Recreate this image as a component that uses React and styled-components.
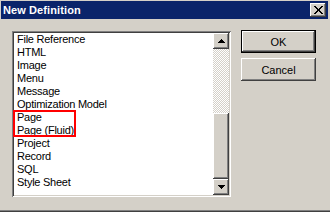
import React from 'react';
import styled, { createGlobalStyle } from 'styled-components';

const ITEMS = [
  'File Reference',
  'HTML',
  'Image',
  'Menu',
  'Message',
  'Optimization Model',
  'Page',
  'Page (Fluid)',
  'Project',
  'Record',
  'SQL',
  'Style Sheet',
];

const MARKED = ['Page', 'Page (Fluid)'];

function Arrow({ down }) {
  return (
    <svg width="7" height="4" viewBox="0 0 7 4" shapeRendering="crispEdges">
      <path d={down ? 'M0 0h7v1H0zM1 1h5v1H1zM2 2h3v1H2zM3 3h1v1H3z' : 'M3 0h1v1H3zM2 1h3v1H2zM1 2h5v1H1zM0 3h7v1H0z'} fill="#000" />
    </svg>
  );
}

function App() {
  const before = ITEMS.slice(0, 6);
  const after = ITEMS.slice(8);
  return (
    <>
      <GlobalStyle />
      <Window>
        <TitleBar>
          <Title>New Definition</Title>
          <CloseButton aria-label="Close">
            <svg width="9" height="8" viewBox="0 0 9 8" shapeRendering="crispEdges">
              <path
                d="M0 0h2v1H0zM7 0h2v1H7zM1 1h2v1H1zM6 1h2v1H6zM2 2h2v1H2zM5 2h2v1H5zM3 3h3v2H3zM2 5h2v1H2zM5 5h2v1H5zM1 6h2v1H1zM6 6h2v1H6zM0 7h2v1H0zM7 7h2v1H7z"
                fill="#000"
              />
            </svg>
          </CloseButton>
        </TitleBar>
        <Body>
          <ListBox>
            <Items>
              {before.map((item) => (
                <Item key={item}>{item}</Item>
              ))}
              <Marked>
                {MARKED.map((item) => (
                  <Item key={item}>{item}</Item>
                ))}
              </Marked>
              {after.map((item) => (
                <Item key={item}>{item}</Item>
              ))}
            </Items>
            <ScrollBar>
              <ScrollButton>
                <Arrow />
              </ScrollButton>
              <Track />
              <Thumb />
              <ScrollButton>
                <Arrow down />
              </ScrollButton>
            </ScrollBar>
          </ListBox>
          <Buttons>
            <Button $default>OK</Button>
            <Button>Cancel</Button>
          </Buttons>
        </Body>
      </Window>
    </>
  );
}

const GlobalStyle = createGlobalStyle`
  html, body {
    margin: 0;
    padding: 0;
    background: #d4d0c8;
  }
  body {
    font-family: "Liberation Sans", Arial, sans-serif;
    font-size: 11px;
  }
`;

const raised = `
  background: #d4d0c8;
  box-shadow:
    inset -1px -1px #404040,
    inset 1px 1px #fff,
    inset -2px -2px #808080;
`;

const Window = styled.div`
  width: 330px;
  height: 212px;
  box-sizing: border-box;
  padding: 1px 2px 2px 1px;
  background: #d4d0c8;
  box-shadow: inset 0 -1px #404040, inset 0 -2px #808080;
  display: flex;
  flex-direction: column;
  overflow: hidden;
`;

const TitleBar = styled.div`
  height: 18px;
  background: #0a246a;
  display: flex;
  align-items: center;
  justify-content: space-between;
  padding: 0 2px 0 2px;
`;

const Title = styled.span`
  color: #fff;
  font-weight: bold;
  font-size: 11px;
  letter-spacing: 0.1px;
`;

const CloseButton = styled.div`
  ${raised}
  width: 16px;
  height: 14px;
  display: flex;
  align-items: center;
  justify-content: center;
  padding-bottom: 1px;
  box-sizing: border-box;
`;

const Body = styled.div`
  display: flex;
  align-items: flex-start;
  gap: 10px;
  padding: 12px 0 0 11px;
`;

const ListBox = styled.div`
  width: 219px;
  height: 166px;
  box-sizing: border-box;
  padding: 2px;
  background: #fff;
  box-shadow:
    inset 1px 1px #808080,
    inset -1px -1px #fff,
    inset 2px 2px #404040,
    inset -2px -2px #d4d0c8;
  display: flex;
`;

const Items = styled.ul`
  flex: 1;
  list-style: none;
  margin: 0;
  padding: 0;
`;

const Item = styled.li`
  height: 13px;
  line-height: 13px;
  padding-left: 3px;
  color: #000;
  letter-spacing: -0.25px;
  white-space: nowrap;
`;

const Marked = styled.div`
  position: relative;

  &::after {
    content: '';
    position: absolute;
    left: -1px;
    top: -1px;
    width: 63px;
    bottom: 0;
    border: 2px solid #ff0000;
    box-sizing: border-box;
  }
`;

const ScrollBar = styled.div`
  width: 16px;
  display: flex;
  flex-direction: column;
`;

const ScrollButton = styled.div`
  ${raised}
  height: 16px;
  display: flex;
  align-items: center;
  justify-content: center;
  flex: none;
`;

const Track = styled.div`
  height: 64px;
  background: repeating-conic-gradient(#d4d0c8 0 25%, #fff 0 50%) 0 0 / 2px 2px;
`;

const Thumb = styled.div`
  ${raised}
  flex: 1;
`;

const Buttons = styled.div`
  display: flex;
  flex-direction: column;
  gap: 5px;
  margin-top: -1px;
`;

const Button = styled.button`
  width: 75px;
  height: 23px;
  font-family: "Liberation Sans", Arial, sans-serif;
  font-size: 11px;
  color: #000;
  border: none;
  padding: 0;
  background: #d4d0c8;
  box-shadow: ${({ $default }) =>
    $default
      ? 'inset 0 0 0 1px #000, inset -2px -2px #404040, inset 2px 2px #fff, inset -3px -3px #808080'
      : 'inset -1px -1px #404040, inset 1px 1px #fff, inset -2px -2px #808080'};
`;

export default App;
